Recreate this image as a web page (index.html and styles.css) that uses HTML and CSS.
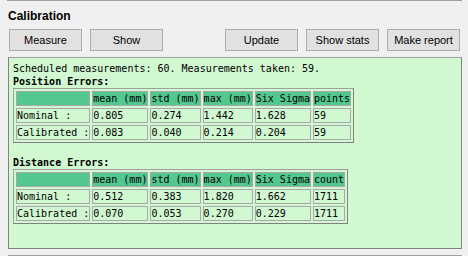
FILE: index.html
```html
<!DOCTYPE html>
<html lang="en">
<head>
    <meta charset="UTF-8">
    <title>Calibration</title>
    <link rel="stylesheet" href="styles.css">
</head>
<body>
<div class="page">
    <div class="rule rule-top"></div>
    <h1 class="title">Calibration</h1>

    <div class="toolbar">
        <button class="btn">Measure</button>
        <button class="btn">Show</button>
        <span class="spacer"></span>
        <button class="btn">Update</button>
        <button class="btn">Show stats</button>
        <button class="btn">Make report</button>
    </div>

    <div class="panel">
        <div class="report">
            <div>Scheduled measurements: 60. Measurements taken: 59.</div>
            <div class="section">Position Errors:</div>
            <table class="stats">
                <tr><th></th><th>mean (mm)</th><th>std (mm)</th><th>max (mm)</th><th>Six Sigma</th><th>points</th></tr>
                <tr><td>Nominal :</td><td>0.805</td><td>0.274</td><td>1.442</td><td>1.628</td><td>59</td></tr>
                <tr><td>Calibrated :</td><td>0.083</td><td>0.040</td><td>0.214</td><td>0.204</td><td>59</td></tr>
            </table>
            <div class="section gap">Distance Errors:</div>
            <table class="stats">
                <tr><th></th><th>mean (mm)</th><th>std (mm)</th><th>max (mm)</th><th>Six Sigma</th><th>count</th></tr>
                <tr><td>Nominal :</td><td>0.512</td><td>0.383</td><td>1.820</td><td>1.662</td><td>1711</td></tr>
                <tr><td>Calibrated :</td><td>0.070</td><td>0.053</td><td>0.270</td><td>0.229</td><td>1711</td></tr>
            </table>
        </div>
    </div>

    <div class="rule rule-bottom"></div>
</div>
</body>
</html>
```

FILE: styles.css
```css
body {
    margin: 0;
    background: #f0f0f0;
    font-family: 'Liberation Sans', Arial, sans-serif;
    color: #000;
}

.page {
    width: 468px;
    height: 256px;
    overflow: hidden;
}

.rule {
    height: 1px;
    background: #a0a0a0;
}
.rule-top {
    margin-left: 7px;
    width: 455px;
}
.rule-bottom {
    margin-left: 8px;
    width: 454px;
    margin-top: 6px;
}

.title {
    margin: 8px 0 0 8px;
    font-size: 12px;
    line-height: 14px;
    font-weight: bold;
}

.toolbar {
    display: flex;
    gap: 8px;
    margin: 6px 0 0 9px;
    width: 451px;
}
.spacer {
    flex: 1;
}
.btn {
    width: 73px;
    height: 22px;
    padding: 0;
    background: #e1e1e1;
    border: 1px solid #adadad;
    font-family: 'Liberation Sans', Arial, sans-serif;
    font-size: 11px;
    color: #000;
}

.panel {
    margin: 6px 0 0 8px;
    width: 452px;
    height: 190px;
    background: #d1f8d1;
    border: 1px solid #828282;
    border-top-color: #a0a0a0;
}

.report {
    padding: 4px 0 0 4px;
    font-family: 'DejaVu Sans Mono', monospace;
    font-size: 10px;
    line-height: 13px;
    white-space: nowrap;
}
.section {
    font-weight: bold;
}
.gap {
    margin-top: 13px;
}

.stats {
    border-collapse: separate;
    border-spacing: 2px;
    border: 1px solid;
    border-color: #a0a0a0 #808080 #808080 #a0a0a0;
    font-size: 10px;
    line-height: 13px;
}
.stats th,
.stats td {
    padding: 0;
    border: 1px solid #a8a8a8;
    text-align: left;
    font-weight: normal;
    white-space: nowrap;
}
.stats th {
    background: #52c78e;
}
```
